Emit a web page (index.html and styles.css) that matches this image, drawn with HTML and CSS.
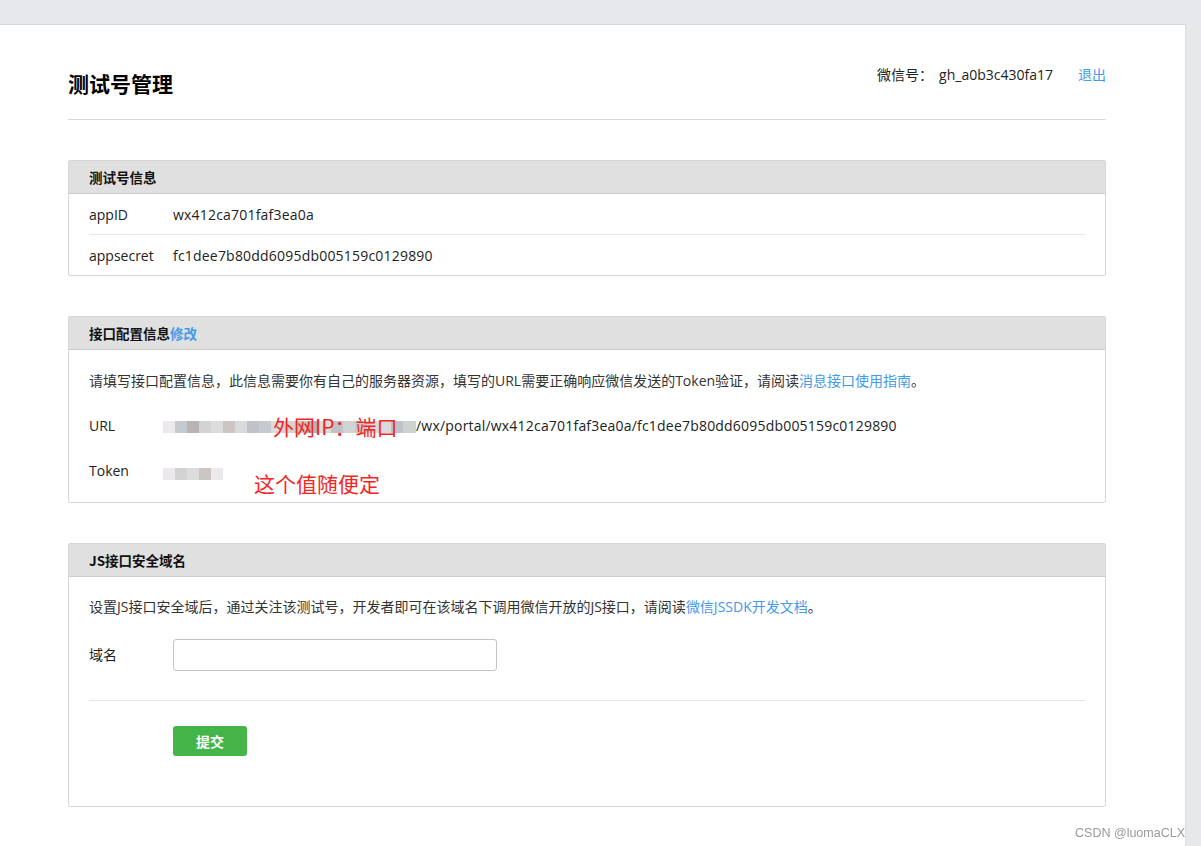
FILE: index.html
```html
<!DOCTYPE html>
<html lang="zh-CN">
<head>
<meta charset="utf-8">
<title>测试号管理</title>
<link rel="stylesheet" href="styles.css">
</head>
<body>
<div class="page">
  <div class="head">
    <h1 class="title">测试号管理</h1>
    <div class="account">
      <span class="acc-label">微信号：</span>
      <span class="acc-id">gh_a0b3c430fa17</span>
      <a class="link logout" href="#">退出</a>
    </div>
  </div>

  <section class="panel">
    <div class="panel-hd">测试号信息</div>
    <div class="panel-bd">
      <div class="row"><span class="label">appID</span><span class="value">wx412ca701faf3ea0a</span></div>
      <div class="row row-sep"><span class="label">appsecret</span><span class="value">fc1dee7b80dd6095db005159c0129890</span></div>
    </div>
  </section>

  <section class="panel">
    <div class="panel-hd">接口配置信息<a class="link" href="#">修改</a></div>
    <div class="panel-bd panel-bd-pad">
      <p class="desc">请填写接口配置信息，此信息需要你有自己的服务器资源，填写的URL需要正确响应微信发送的Token验证，请阅读<a class="link" href="#">消息接口使用指南</a>。</p>
      <div class="frow frow-url">
        <span class="label">URL</span>
        <span class="val-url"><span class="mosaic mosaic-url"><span class="m m1"></span><span class="m m2"></span><span class="m m3"></span><span class="m m4"></span><span class="m m5"></span><span class="m m6"></span><span class="m m7"></span><span class="m m8"></span><span class="m m2"></span><span class="m m5"></span><span class="m m4"></span><span class="m m6"></span><span class="m m3"></span><span class="m m5"></span><span class="m m8"></span><span class="m m4"></span><span class="m m2"></span><span class="m m5"></span><span class="m m7"></span><span class="m m8"></span><span class="m m9"></span><span class="note note-url">外网IP：端口</span></span><span class="url-text">/wx/portal/wx412ca701faf3ea0a/fc1dee7b80dd6095db005159c0129890</span></span>
      </div>
      <div class="frow frow-token">
        <span class="label">Token</span>
        <span class="mosaic mosaic-token"><span class="m m1"></span><span class="m m4"></span><span class="m m5"></span><span class="m m6"></span><span class="m m1"></span></span>
        <span class="note note-token">这个值随便定</span>
      </div>
    </div>
  </section>

  <section class="panel">
    <div class="panel-hd">JS接口安全域名</div>
    <div class="panel-bd panel-bd-js">
      <p class="desc">设置JS接口安全域后，通过关注该测试号，开发者即可在该域名下调用微信开放的JS接口，请阅读<a class="link" href="#">微信JSSDK开发文档</a>。</p>
      <div class="frow frow-domain">
        <span class="label">域名</span>
        <input class="input" type="text">
      </div>
      <div class="actions">
        <button class="btn" type="button">提交</button>
      </div>
    </div>
  </section>
</div>
<div class="watermark">CSDN @luomaCLX</div>
</body>
</html>
```

FILE: styles.css
```css
html, body {
  margin: 0;
  padding: 0;
}
body {
  background: #e7e8eb;
  font-family: "Open Sans", "Noto Sans CJK SC", "Microsoft YaHei", sans-serif;
  font-size: 14px;
  color: #222;
  height: 846px;
  overflow: hidden;
}
.page {
  margin-top: 24px;
  width: 1186px;
  min-height: 822px;
  box-sizing: border-box;
  background: #fff;
  border-top: 1px solid #d5d6d8;
  border-right: 1px solid #dcdde0;
  padding: 0 79px 0 68px;
}
.head {
  display: flex;
  justify-content: space-between;
  align-items: flex-start;
  padding-top: 40px;
  padding-bottom: 21px;
  border-bottom: 1px solid #d9d9d9;
}
.title {
  margin: 3px 0 0 0;
  font-family: "Noto Sans CJK SC", sans-serif;
  font-size: 21px;
  line-height: 30px;
  font-weight: bold;
  color: #000;
}
.account {
  display: flex;
  align-items: center;
  line-height: 20px;
  height: 20px;
  font-size: 14px;
  color: #222;
}
.acc-id {
  margin-left: 6px;
}
.logout {
  margin-left: 25px;
}
.link {
  color: #459ae9;
  text-decoration: none;
}
.panel {
  margin-top: 40px;
  border: 1px solid #d6d6d6;
  border-radius: 2px;
}
.panel-hd {
  background: #e0e0e0;
  border-bottom: 1px solid #cccccc;
  line-height: 32px;
  height: 32px;
  padding: 0 20px;
  font-family: "Noto Sans CJK SC", sans-serif;
  font-weight: bold;
  font-size: 13.5px;
  color: #111;
}
.panel-bd {
  padding: 0 20px;
}
.row {
  display: flex;
  align-items: center;
  height: 40px;
}
.row-sep {
  border-top: 1px solid #e6e6e6;
}
.label {
  flex: 0 0 84px;
  width: 84px;
}
.value {
  color: #222;
  letter-spacing: 0.2px;
}
.panel-bd-pad {
  padding-top: 20px;
  padding-bottom: 20px;
}
.desc {
  margin: 0;
  line-height: 22px;
  height: 22px;
  font-size: 14px;
  color: #333;
  white-space: nowrap;
}
.frow {
  display: flex;
  align-items: center;
  height: 22px;
  line-height: 22px;
  position: relative;
}
.frow-url {
  margin-top: 23px;
}
.frow-token {
  margin-top: 23px;
}
.val-url {
  display: flex;
  align-items: center;
  margin-left: -10px;
}
.url-text {
  letter-spacing: 0.2px;
}
.mosaic {
  position: relative;
  display: flex;
  height: 12px;
  flex: none;
}
.mosaic-url {
  width: 253px;
  margin-top: 1px;
}
.mosaic-token {
  margin-left: -10px;
  margin-top: 6px;
}
.m {
  display: block;
  width: 12px;
  height: 12px;
  flex: none;
}
.m1 { background: #ece9ec; }
.m2 { background: #c6cad0; }
.m3 { background: #b9b4b4; }
.m4 { background: #d3d3d3; }
.m5 { background: #dcdcdc; }
.m6 { background: #cbc5c3; }
.m7 { background: #d9dadc; }
.m8 { background: #bfc3c7; }
.m9 { background: #cfd3d0; width: 13px; }
.note {
  position: absolute;
  color: #f5251f;
  font-family: "Noto Sans CJK SC", sans-serif;
  font-size: 21px;
  line-height: 28px;
  white-space: nowrap;
}
.note-url {
  left: 110px;
  top: -9px;
}
.note-token {
  left: 165px;
  top: 9px;
}
.panel-bd-js {
  padding-top: 19px;
  padding-bottom: 50px;
}
.frow-domain {
  margin-top: 21px;
  height: 32px;
  padding-bottom: 29px;
  border-bottom: 1px solid #e6e6e6;
}
.input {
  width: 324px;
  height: 32px;
  box-sizing: border-box;
  border: 1px solid #c4c4c4;
  border-radius: 3px;
  padding: 0 8px;
  font-family: inherit;
  font-size: 14px;
  margin: 0;
  outline: none;
}
.actions {
  padding-top: 25px;
  padding-left: 84px;
  display: flex;
}
.btn {
  width: 74px;
  height: 30px;
  border: none;
  border-radius: 3px;
  background: #44b549;
  color: #fff;
  font-family: "Noto Sans CJK SC", sans-serif;
  font-size: 14px;
  font-weight: bold;
  padding: 0;
  cursor: pointer;
}
.watermark {
  position: fixed;
  right: 16px;
  bottom: 6px;
  font-family: "Liberation Sans", Arial, sans-serif;
  font-size: 12.5px;
  color: #9a9a9a;
}
```
